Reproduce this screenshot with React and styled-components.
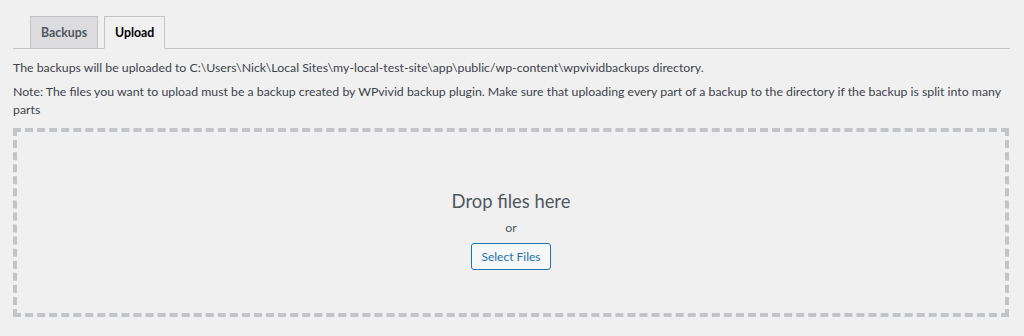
import React, { useState } from "react";
import styled, { createGlobalStyle } from "styled-components";

const GlobalStyle = createGlobalStyle`
  body {
    margin: 0;
    background: #f0f0f1;
    font-family: "Lato", "Open Sans", sans-serif;
    font-size: 12.3px;
    color: #3c434a;
  }
`;

const Wrap = styled.div`
  padding: 16px 14px 0 13px;
`;

const TabBar = styled.nav`
  display: flex;
  gap: 6px;
  padding-left: 17px;
  border-bottom: 1px solid #c3c4c7;
`;

const Tab = styled.button`
  font-family: inherit;
  font-size: 12.3px;
  font-weight: 700;
  line-height: 20px;
  padding: 5px 10px;
  margin-bottom: -1px;
  border: 1px solid #c3c4c7;
  border-bottom-color: ${(p) => (p.$active ? "#f0f0f1" : "#c3c4c7")};
  background: ${(p) => (p.$active ? "#f0f0f1" : "#dcdcde")};
  color: ${(p) => (p.$active ? "#000" : "#50575e")};
  cursor: pointer;
  height: 33px;
`;

const Text = styled.p`
  margin: 10px 0 0;
  line-height: 18px;

  & + & {
    margin-top: 6px;
  }
`;

const DropZone = styled.div`
  margin-top: 9px;
  margin-right: 1px;
  height: 189px;
  box-sizing: border-box;
  border: 4px dashed #c3c4c7;
  display: flex;
  flex-direction: column;
  align-items: center;
  padding-top: 55px;
`;

const DropTitle = styled.div`
  font-size: 18.4px;
  line-height: 28px;
  color: #50575e;
`;

const Or = styled.div`
  margin-top: 4px;
  line-height: 18px;
  color: #50575e;
`;

const SelectButton = styled.button`
  margin-top: 6px;
  font-family: inherit;
  font-size: 12px;
  height: 27px;
  padding: 0 9px;
  border: 1px solid #2271b1;
  border-radius: 3px;
  background: #f6f7f7;
  color: #2271b1;
  cursor: pointer;
`;

export default function App() {
  const [tab, setTab] = useState("upload");

  return (
    <Wrap>
      <GlobalStyle />
      <TabBar>
        <Tab $active={tab === "backups"} onClick={() => setTab("backups")}>
          Backups
        </Tab>
        <Tab $active={tab === "upload"} onClick={() => setTab("upload")}>
          Upload
        </Tab>
      </TabBar>
      <Text>
        The backups will be uploaded to
        C:\Users\Nick\Local Sites\my-local-test-site\app\public/wp-content\wpvividbackups directory.
      </Text>
      <Text>
        Note: The files you want to upload must be a backup created by WPvivid backup plugin. Make
        sure that uploading every part of a backup to the directory if the backup is split into many
        parts
      </Text>
      <DropZone>
        <DropTitle>Drop files here</DropTitle>
        <Or>or</Or>
        <SelectButton>Select Files</SelectButton>
      </DropZone>
    </Wrap>
  );
}
